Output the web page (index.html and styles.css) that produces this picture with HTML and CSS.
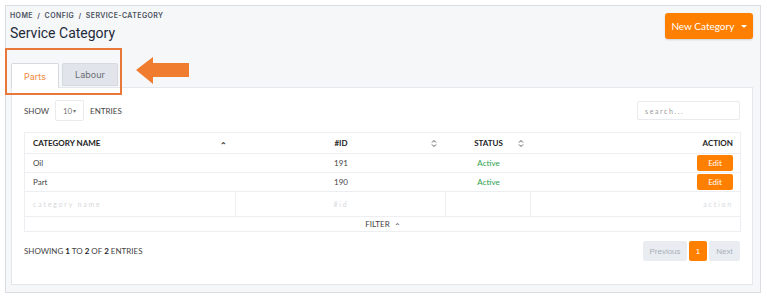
FILE: index.html
```html
<!DOCTYPE html>
<html lang="en">
<head>
    <meta charset="UTF-8">
    <meta name="viewport" content="width=device-width, initial-scale=1.0">
    <title>Service Category</title>
    <link rel="stylesheet" href="styles.css">
</head>
<body>

    <div class="frame">
        <div class="page-head">
            <div>
                <div class="crumbs">HOME &nbsp;/&nbsp; CONFIG &nbsp;/&nbsp; SERVICE-CATEGORY</div>
                <h1>Service Category</h1>
            </div>
            <button class="btn-new">New Category <span class="caret"></span></button>
        </div>

        <div class="tabs">
            <div class="tab active">Parts</div>
            <div class="tab">Labour</div>
            <!-- annotation -->
            <div class="mark"></div>
            <svg class="arrow" width="54" height="28" viewBox="0 0 54 28">
                <polygon points="0,13 17,0 17,6 53,6 53,20 17,20 17,27" fill="#f07d2f"/>
            </svg>
        </div>

        <div class="card">
            <div class="toolbar">
                <div class="length">
                    SHOW <span class="select">10<span class="tri">&#9662;</span></span> ENTRIES
                </div>
                <div class="search">search...</div>
            </div>

            <table class="grid">
                <colgroup>
                    <col style="width:211px">
                    <col style="width:210px">
                    <col style="width:85px">
                    <col style="width:210px">
                </colgroup>
                <thead>
                    <tr>
                        <th><div class="th-left">CATEGORY NAME <span class="up">&#8963;</span></div></th>
                        <th>
                            <div class="th-mid">
                                <span></span><span>#ID</span>
                                <svg class="sort" width="6" height="9" viewBox="0 0 6 9"><path d="M1 3.5 L3 1.5 L5 3.5 M1 5.5 L3 7.5 L5 5.5" fill="none" stroke="#555" stroke-width="1"/></svg>
                            </div>
                        </th>
                        <th>
                            <div class="th-mid status-th">
                                <span></span><span>STATUS</span>
                                <svg class="sort" width="6" height="9" viewBox="0 0 6 9"><path d="M1 3.5 L3 1.5 L5 3.5 M1 5.5 L3 7.5 L5 5.5" fill="none" stroke="#555" stroke-width="1"/></svg>
                            </div>
                        </th>
                        <th class="right">ACTION</th>
                    </tr>
                </thead>
                <tbody>
                    <tr>
                        <td>Oil</td>
                        <td class="center">191</td>
                        <td class="center active-txt">Active</td>
                        <td class="right"><button class="btn-edit">Edit</button></td>
                    </tr>
                    <tr>
                        <td>Part</td>
                        <td class="center">190</td>
                        <td class="center active-txt">Active</td>
                        <td class="right"><button class="btn-edit">Edit</button></td>
                    </tr>
                    <tr class="filters">
                        <td>category name</td>
                        <td class="center">#id</td>
                        <td></td>
                        <td class="right">action</td>
                    </tr>
                    <tr class="filter-toggle">
                        <td colspan="4">FILTER &nbsp;<span class="up">&#8963;</span></td>
                    </tr>
                </tbody>
            </table>

            <div class="foot">
                <div class="info">SHOWING <b>1</b> TO <b>2</b> OF <b>2</b> ENTRIES</div>
                <div class="pager">
                    <span class="pg off">Previous</span>
                    <span class="pg cur">1</span>
                    <span class="pg off">Next</span>
                </div>
            </div>
        </div>
    </div>

</body>
</html>
```

FILE: styles.css
```css
body {
    margin: 0;
    background: #fff;
    font-family: Lato, "Noto Sans", sans-serif;
    color: #333;
}

.frame {
    margin: 5px 6px 5px 5px;
    border: 1px solid #d9dde2;
    background: #f6f7f9;
    padding: 4px 7px 0 4px;
    box-sizing: border-box;
    height: 288px;
}

.page-head {
    display: flex;
    justify-content: space-between;
    align-items: flex-start;
}

.crumbs {
    font-family: Inter, sans-serif;
    font-size: 7px;
    font-weight: 600;
    letter-spacing: 0.4px;
    color: #4a5260;
    line-height: 10px;
    margin-top: 1px;
}

h1 {
    font-family: Roboto, sans-serif;
    font-size: 14px;
    font-weight: 400;
    color: #1f2a3a;
    margin: 4px 0 0 0;
    line-height: 17px;
}

.btn-new {
    margin-top: 3px;
    width: 88px;
    height: 26px;
    background: #ff7f00;
    color: #fff;
    border: none;
    border-radius: 3px;
    font-family: Lato, sans-serif;
    font-size: 10px;
    padding: 0;
    box-shadow: 0 1px 2px rgba(0, 0, 0, 0.15);
}

.caret {
    display: inline-block;
    width: 0;
    height: 0;
    margin-left: 4px;
    vertical-align: 2px;
    border-left: 3px solid transparent;
    border-right: 3px solid transparent;
    border-top: 3px solid #fff;
}

.tabs {
    position: relative;
    display: flex;
    gap: 3px;
    margin: 21px 0 0 1px;
    height: 24px;
}

.tab {
    width: 48px;
    height: 23px;
    box-sizing: border-box;
    display: flex;
    align-items: center;
    justify-content: center;
    font-family: Inter, sans-serif;
    font-size: 9px;
    color: #6b6f75;
    background: #e1e4ea;
    border: 1px solid #d6dae0;
    border-radius: 2px 2px 0 0;
}

.tab + .tab {
    width: 56px;
}

.tab.active {
    height: 25px;
    background: #fff;
    color: #f08a3c;
    border-bottom: none;
    position: relative;
    z-index: 1;
}

.mark {
    position: absolute;
    left: -6px;
    top: -15px;
    width: 117px;
    height: 47px;
    border: 2px solid #e8783a;
    box-sizing: border-box;
    z-index: 2;
}

.arrow {
    position: absolute;
    left: 125px;
    top: -6px;
}

.card {
    margin: 0 0 0 1px;
    background: #fff;
    border: 1px solid #e4e7eb;
    padding: 12px 12px 0 12px;
    height: 198px;
    box-sizing: border-box;
}

.toolbar {
    display: flex;
    justify-content: space-between;
    align-items: center;
    height: 21px;
}

.length {
    font-size: 8px;
    color: #444;
    display: flex;
    align-items: center;
    gap: 6px;
}

.select {
    display: inline-flex;
    align-items: center;
    justify-content: center;
    width: 29px;
    height: 21px;
    box-sizing: border-box;
    border: 1px solid #e8eaee;
    border-radius: 2px;
    color: #777;
    font-size: 8px;
}

.tri {
    font-size: 6px;
    margin-left: 1px;
}

.search {
    width: 103px;
    height: 19px;
    box-sizing: border-box;
    border: 1px solid #e8eaee;
    border-radius: 2px;
    font-size: 7px;
    letter-spacing: 1.6px;
    color: #999;
    padding: 5px 0 0 7px;
}

.grid {
    margin-top: 11px;
    width: 716px;
    border-collapse: collapse;
    table-layout: fixed;
    border: 1px solid #eceef1;
    font-size: 8px;
}

.grid th {
    height: 20px;
    padding: 0 7px 0 8px;
    text-align: left;
    font-weight: 700;
    color: #222;
    border-bottom: 1px solid #eceef1;
}

.grid td {
    height: 18px;
    padding: 0 7px 0 8px;
    color: #444;
    border-bottom: 1px solid #eceef1;
}

.th-left {
    display: flex;
    justify-content: space-between;
    align-items: center;
    padding-right: 2px;
}

.up {
    font-size: 8px;
    color: #444;
    position: relative;
    top: 2px;
}

.th-mid {
    display: grid;
    grid-template-columns: 1fr auto 1fr;
    align-items: center;
}

.th-mid .sort {
    justify-self: end;
    margin-right: 2px;
}

.status-th .sort {
    margin-right: 0;
}

.right {
    text-align: right !important;
}

.center {
    text-align: center;
}

.active-txt {
    color: #2ba24c !important;
}

.btn-edit {
    width: 36px;
    height: 16px;
    background: #ff7f00;
    color: #fff;
    border: none;
    border-radius: 2px;
    font-family: Lato, sans-serif;
    font-size: 8px;
    padding: 0;
    vertical-align: middle;
}

.grid tr.filters td {
    height: 24px;
    font-size: 7px;
    letter-spacing: 1.8px;
    color: #d6d8db;
    border-right: 1px solid #eceef1;
}

.grid tr.filter-toggle td {
    height: 14px;
    text-align: center;
    color: #444;
    border-bottom: none;
}

.foot {
    display: flex;
    justify-content: space-between;
    align-items: center;
    margin-top: 9px;
}

.info {
    font-size: 8px;
    color: #444;
}

.info b {
    color: #222;
}

.pager {
    display: flex;
    gap: 2px;
    font-family: "Liberation Sans", Arial, sans-serif;
    font-size: 8px;
}

.pg {
    height: 20px;
    display: flex;
    align-items: center;
    justify-content: center;
    border-radius: 2px;
}

.pg.off {
    background: #e9edf2;
    color: #a9b0b8;
    width: 44px;
}

.pg.off:last-child {
    width: 31px;
}

.pg.cur {
    background: #ff7f00;
    color: #fff;
    width: 18px;
}
```
